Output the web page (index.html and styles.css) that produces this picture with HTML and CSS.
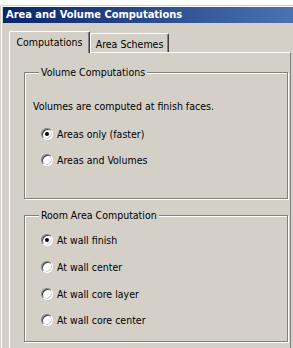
FILE: index.html
```html
<!DOCTYPE html>
<html lang="en">
<head>
    <meta charset="UTF-8">
    <meta name="viewport" content="width=device-width, initial-scale=1.0">
    <title>Area and Volume Computations</title>
    <link rel="stylesheet" href="styles.css">
</head>
<body>
    <div class="window">
        <div class="titlebar">Area and Volume Computations</div>

        <div class="client">
            <div class="tabs">
                <div class="tab active">Computations</div>
                <div class="tab">Area Schemes</div>
            </div>

            <div class="page">
                <fieldset class="group">
                    <legend>Volume Computations</legend>
                    <div class="note">Volumes are computed at finish faces.</div>
                    <div class="option"><span class="radio checked"></span>Areas only (faster)</div>
                    <div class="option"><span class="radio"></span>Areas and Volumes</div>
                </fieldset>

                <fieldset class="group rooms">
                    <legend>Room Area Computation</legend>
                    <div class="option"><span class="radio checked"></span>At wall finish</div>
                    <div class="option"><span class="radio"></span>At wall center</div>
                    <div class="option"><span class="radio"></span>At wall core layer</div>
                    <div class="option"><span class="radio"></span>At wall core center</div>
                </fieldset>
            </div>
        </div>
    </div>
</body>
</html>
```

FILE: styles.css
```css
/* Classic Windows dialog */
body {
    margin: 0;
    background: #fff;
    font-family: "DejaVu Sans Condensed", "DejaVu Sans", sans-serif;
    font-stretch: condensed;
    font-size: 10.5px;
    color: #000;
}

.window {
    margin-top: 5px;
    min-height: calc(100vh - 5px);
    box-sizing: border-box;
    border-top: 1px solid #d4d0c8;
    border-left: 1px solid #d4d0c8;
    padding: 1px 0 0 2px;
    background: #d4d0c8;
    box-shadow: inset 1px 1px 0 #fff;
    display: flex;
    flex-direction: column;
}

.titlebar {
    height: 16px;
    line-height: 16px;
    padding-left: 3px;
    color: #fff;
    font-size: 11px;
    font-weight: bold;
    background: linear-gradient(to right, #0a246a, #4a72b2);
}

.client {
    flex: 1;
    padding: 8px 0 0 6px;
    display: flex;
    flex-direction: column;
}

.tabs {
    display: flex;
    align-items: flex-end;
    height: 21px;
}

.tab {
    box-sizing: border-box;
    height: 19px;
    padding-top: 4px;
    line-height: 13px;
    text-align: center;
    border-top: 1px solid #fff;
    border-left: 1px solid #fff;
    border-right: 1px solid #404040;
    border-radius: 2px 2px 0 0;
    box-shadow: inset -1px 0 0 #808080;
    width: 79px;
}

.tab.active {
    position: relative;
    z-index: 1;
    height: 22px;
    margin-bottom: -1px;
    width: 81px;
    background: #d4d0c8;
}

.page {
    flex: 1;
    width: 282px;
    box-sizing: border-box;
    border-top: 1px solid #fff;
    border-left: 1px solid #fff;
    border-right: 1px solid #808080;
    padding: 13px 0 0 14px;
}

.group {
    width: 264px;
    box-sizing: border-box;
    margin: 0;
    padding: 0 0 25px 8px;
    min-inline-size: 0;
    border: 1px solid #808080;
    box-shadow: 1px 1px 0 #fff, inset 1px 1px 0 #fff;
}

.group legend {
    margin-left: 6px;
    padding: 0 2px;
    line-height: 13px;
    background: #d4d0c8;
}

.group.rooms {
    margin-top: 10px;
    padding-top: 5px;
    padding-bottom: 7px;
}

.group.rooms .option {
    height: 26.67px;
}

.note {
    margin-top: 21px;
    margin-bottom: 8px;
    line-height: 13px;
}

.option {
    height: 26px;
    display: flex;
    align-items: center;
    padding-left: 8px;
}

.radio {
    position: relative;
    width: 12px;
    height: 12px;
    box-sizing: border-box;
    margin-right: 4px;
    border-radius: 50%;
    background: #fff;
    border: 1px solid;
    border-color: #808080 #fff #fff #808080;
    box-shadow: inset 1px 1px 0 #404040, inset -1px -1px 0 #d4d0c8;
}

.radio.checked::after {
    content: "";
    position: absolute;
    top: 3px;
    left: 3px;
    width: 4px;
    height: 4px;
    border-radius: 50%;
    background: #000;
}
```
